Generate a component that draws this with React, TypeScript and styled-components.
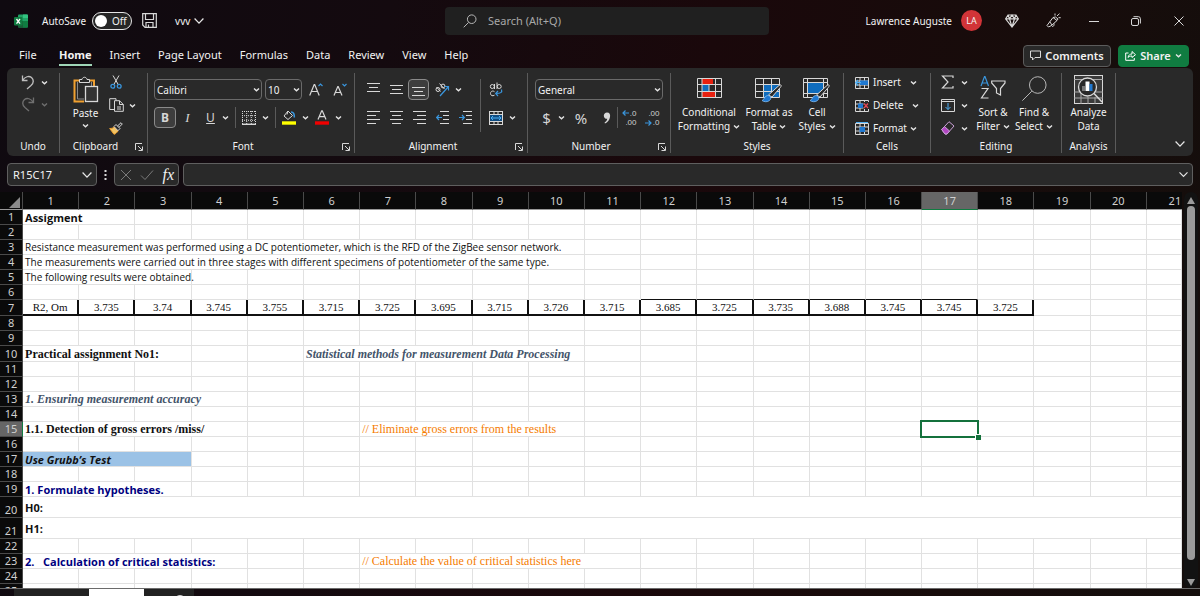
import React from "react";
import styled, { createGlobalStyle, css } from "styled-components";

const ui = `"Noto Sans", "Open Sans", sans-serif`;
const calibri = `"Open Sans", "Noto Sans", sans-serif`;
const times = `"Liberation Serif", serif`;

const Global = createGlobalStyle`
  *, *::before, *::after { box-sizing: border-box; }
  body { margin: 0; background: #150a0e; overflow: hidden; }
  button, input, select { font: inherit; color: inherit; }
`;

const Page = styled.div`
  display: flex;
  flex-direction: column;
  height: 100vh;
  overflow: hidden;
  background: linear-gradient(100deg, #0f0a10 0%, #140a0f 30%, #1a080b 55%, #170c0b 80%, #140e0c 100%);
  color: #f2f2f2;
  font-family: ${ui};
  font-size: 11px;
  line-height: 14px;
`;

/* ---------- title bar ---------- */

const TitleBar = styled.header`
  display: flex;
  align-items: center;
  height: 41px;
  padding-left: 14px;
  flex: none;
`;

const TitleSide = styled.div<{ $end?: boolean }>`
  flex: 1;
  display: flex;
  align-items: center;
  justify-content: ${(p) => (p.$end ? "flex-end" : "flex-start")};
`;

const AutoSave = styled.label`
  display: flex;
  align-items: center;
  gap: 6px;
  margin-left: 14px;
  font-size: 10px;
  input {
    position: absolute;
    opacity: 0;
  }
`;

const Track = styled.span`
  display: flex;
  align-items: center;
  gap: 5px;
  width: 40px;
  height: 18px;
  padding-left: 2px;
  border: 1px solid #e6e6e6;
  border-radius: 9px;
  background: #262626;
  &::before {
    content: "";
    width: 12px;
    height: 12px;
    border-radius: 50%;
    background: #fff;
  }
`;

const PlainButton = styled.button<{ $w?: number; $h?: number }>`
  display: flex;
  align-items: center;
  justify-content: center;
  gap: 4px;
  flex: none;
  ${(p) => p.$w && `width: ${p.$w}px;`}
  ${(p) => p.$h && `height: ${p.$h}px;`}
  padding: 0;
  border: 0;
  background: none;
  line-height: 14px;
  white-space: nowrap;
`;

const FileName = styled(PlainButton)`
  margin-left: 18px;
  font-size: 10px;
`;

const SaveButton = styled(PlainButton)`
  margin-left: 10px;
`;

const Search = styled.label`
  display: flex;
  align-items: center;
  gap: 11px;
  flex: 0 1 324px;
  height: 28px;
  padding-left: 18px;
  border-radius: 4px;
  background: #202020;
  input {
    flex: 1;
    min-width: 0;
    padding: 0;
    border: 0;
    outline: 0;
    background: none;
  }
  input::placeholder {
    color: #a8a8a8;
    opacity: 1;
  }
`;

const Account = styled(PlainButton)`
  gap: 9px;
  margin-right: 9px;
  font-size: 10px;
`;

const Avatar = styled.span`
  width: 21px;
  height: 21px;
  border-radius: 50%;
  background: #d13438;
  font-size: 9px;
  line-height: 21px;
  text-align: center;
`;

/* ---------- ribbon tabs ---------- */

const TabRow = styled.nav`
  display: flex;
  align-items: center;
  gap: 18px;
  height: 27px;
  flex: none;
  padding: 2px 11px 0 19px;
`;

const RibbonTab = styled.a<{ $active?: boolean }>`
  min-width: 22px;
  padding-bottom: 1px;
  border-bottom: 2px solid ${(p) => (p.$active ? "#9fd5b7" : "transparent")};
  color: inherit;
  font-weight: ${(p) => (p.$active ? 700 : 400)};
  line-height: 17px;
  text-decoration: none;
`;

const TabActions = styled.div`
  display: flex;
  gap: 7px;
  margin-left: auto;
`;

const Pill = styled.button<{ $green?: boolean }>`
  display: flex;
  align-items: center;
  justify-content: center;
  gap: 4px;
  width: ${(p) => (p.$green ? 71 : 88)}px;
  height: 22px;
  padding: 0;
  border: 1px solid ${(p) => (p.$green ? "#107c41" : "#5c5c5c")};
  border-radius: 4px;
  background: ${(p) => (p.$green ? "#107c41" : "#292929")};
  font-weight: 600;
`;

/* ---------- ribbon ---------- */

const Ribbon = styled.section`
  display: flex;
  flex: none;
  height: 88px;
  margin: 0 7px;
  padding: 5px 0 3px;
  border-radius: 6px;
  background: #292929;
  font-size: 10px;
`;

const Group = styled.div<{ $w: number }>`
  display: flex;
  flex-direction: column;
  justify-content: space-between;
  width: ${(p) => p.$w}px;
  flex: none;
  border-right: 1px solid #5a5a5a;
`;

const GroupLabel = styled.div<{ $more?: boolean }>`
  display: grid;
  grid-template-columns: ${(p) => (p.$more ? "1fr 16px" : "1fr")};
  align-items: center;
  height: 13px;
  line-height: 13px;
  text-align: center;
  button {
    justify-self: center;
  }
`;

const GroupBody = styled.div<{ $pad?: string; $gap?: number }>`
  display: flex;
  align-items: flex-start;
  gap: ${(p) => p.$gap ?? 0}px;
  padding: ${(p) => p.$pad ?? "0"};
`;

const Column = styled.div<{ $gap?: number; $pad?: string }>`
  display: flex;
  flex-direction: column;
  gap: ${(p) => p.$gap ?? 5}px;
  padding: ${(p) => p.$pad ?? "0"};
`;

const Row = styled.div<{ $h?: number; $gap?: number }>`
  display: flex;
  align-items: center;
  gap: ${(p) => p.$gap ?? 0}px;
  height: ${(p) => p.$h ?? 21}px;
`;

const Tool = styled(PlainButton)<{ $on?: boolean }>`
  ${(p) =>
    p.$on &&
    css`
      border: 1px solid #8a8a8a;
      border-radius: 4px;
      background: #3d3d3d;
    `}
`;

const BigTool = styled(PlainButton)<{ $gap?: number }>`
  flex-direction: column;
  justify-content: flex-start;
  gap: ${(p) => p.$gap ?? 0}px;
  span {
    display: flex;
    align-items: center;
    gap: 3px;
  }
`;

const Art = styled.div<{ $h: number }>`
  height: ${(p) => p.$h}px;
`;

const Glyph = styled.span<{ $serif?: boolean; $size?: number; $b?: boolean; $i?: boolean; $u?: boolean }>`
  font-family: ${(p) => (p.$serif ? times : ui)};
  font-size: ${(p) => p.$size ?? 12}px;
  font-weight: ${(p) => (p.$b ? 700 : 400)};
  font-style: ${(p) => (p.$i ? "italic" : "normal")};
  text-decoration: ${(p) => (p.$u ? "underline" : "none")};
  color: #d6d6d6;
`;

const Divider = styled.span<{ $h?: number }>`
  width: 1px;
  height: ${(p) => p.$h ?? 21}px;
  background: #5a5a5a;
`;

const Picker = styled.span<{ $w: number }>`
  position: relative;
  width: ${(p) => p.$w}px;
  select {
    width: 100%;
    height: 21px;
    padding: 0 0 0 2px;
    border: 1px solid #6a6a6a;
    border-radius: 4px;
    appearance: none;
    background: #292929;
  }
  svg {
    position: absolute;
    right: 2px;
    top: 7px;
    pointer-events: none;
  }
`;

const CollapseButton = styled(PlainButton)`
  align-self: flex-end;
  margin: 0 8px 4px auto;
`;

/* ---------- formula bar ---------- */

const FormulaBar = styled.div`
  display: flex;
  align-items: center;
  flex: none;
  gap: 4px;
  padding: 7px 7px 6px;
`;

const BarBox = styled.div<{ $w?: number }>`
  display: flex;
  align-items: center;
  justify-content: space-between;
  ${(p) => (p.$w ? `width: ${p.$w}px;` : "flex: 1;")}
  height: 23px;
  padding: 0 4px 0 5px;
  border: 1px solid #5f5f5f;
  border-radius: 4px;
  background: #292929;
  input {
    flex: 1;
    min-width: 0;
    padding: 0;
    border: 0;
    outline: 0;
    background: none;
  }
`;

const Fx = styled.span`
  font-family: ${times};
  font-size: 16px;
  font-style: italic;
`;

/* ---------- sheet ---------- */

const SheetArea = styled.main`
  display: flex;
  flex: 1;
  min-height: 0;
  overflow: hidden;
`;

const SheetView = styled.div`
  flex: 1;
  min-width: 0;
  overflow: hidden;
  background: #fff;
`;

const Table = styled.table`
  width: 100%;
  table-layout: fixed;
  border-collapse: separate;
  border-spacing: 0;
  color: #111;
`;

const HeadCell = styled.th<{ $on?: boolean; $row?: boolean; $last?: boolean }>`
  height: ${(p) => (p.$row ? 15 : 18)}px;
  padding: 0 0 0 ${(p) => (p.$last ? 21 : 0)}px;
  overflow: hidden;
  background: ${(p) => (p.$on ? "#666" : "#0a0a0a")};
  border: 0 solid #4a4a4a;
  border-right-width: ${(p) => (p.$last ? 0 : 1)}px;
  border-bottom-width: 1px;
  ${(p) => !p.$row && `border-bottom-color: ${p.$on ? "#107c41" : "#9a9a9a"};`}
  ${(p) => p.$row && p.$on && "border-right-color: #107c41;"}
  color: #d0d0d0;
  font-size: 11px;
  font-weight: 400;
  line-height: 14px;
  text-align: center;
  vertical-align: ${(p) => (p.$row ? "bottom" : "middle")};
`;

const Corner = styled(HeadCell)`
  svg {
    display: block;
    margin: 4px 2px 0 auto;
  }
`;

type Look = "plain" | "bold" | "boldItalic" | "navy" | "serifBold" | "serifItalic" | "orange" | "value";

const looks: Record<Look, ReturnType<typeof css>> = {
  plain: css`font-family: ${calibri}; font-size: 10px;`,
  bold: css`font-family: ${calibri}; font-size: 11px; font-weight: 700;`,
  boldItalic: css`font-family: ${calibri}; font-size: 11px; font-weight: 700; font-style: italic;`,
  navy: css`font-family: ${calibri}; font-size: 11px; font-weight: 700; color: #000080;`,
  serifBold: css`font-family: ${times}; font-size: 12px; font-weight: 700;`,
  serifItalic: css`font-family: ${times}; font-size: 12px; font-weight: 700; font-style: italic; color: #44546a;`,
  orange: css`font-family: ${times}; font-size: 12px; color: #f57c00;`,
  value: css`font-family: ${times}; font-size: 11px; text-align: center;`,
};

const Cell = styled.td<{ $look: Look; $h: number; $boxed?: boolean; $topped?: boolean; $fill?: string; $mid?: boolean }>`
  position: relative;
  height: ${(p) => p.$h}px;
  padding: 0 0 0 ${(p) => (p.$look === "value" ? 0 : 2)}px;
  border: 0 solid #e1e1e1;
  border-right-width: 1px;
  border-bottom-width: 1px;
  line-height: 13px;
  white-space: pre;
  vertical-align: ${(p) => (p.$mid ? "middle" : "bottom")};
  background: ${(p) => p.$fill ?? "none"};
  ${(p) => looks[p.$look]}
  ${(p) => p.$boxed && "border-color: #111; border-bottom-width: 2px; border-right-width: 2px;"}
  ${(p) => p.$topped && "border-bottom-color: #111;"}
`;

const Selection = styled.span`
  position: absolute;
  z-index: 1;
  inset: -2px;
  border: 2px solid #14713c;
  &::after {
    content: "";
    position: absolute;
    right: -4px;
    bottom: -4px;
    width: 6px;
    height: 6px;
    border: solid #fff;
    border-width: 1px 0 0 1px;
    background: #14713c;
  }
`;

const ScrollBar = styled.div`
  display: flex;
  flex-direction: column;
  align-items: center;
  justify-content: space-between;
  width: 14px;
  margin: 0 2px;
  padding: 5px 0 2px;
  border-radius: 7px;
  background: #121212;
`;

const Thumb = styled.div`
  width: 8px;
  flex: 1;
  margin: 2px 0 19px;
  border-radius: 4px;
  background: #9a9a9a;
`;

const SheetTabs = styled.footer`
  display: flex;
  flex: none;
  height: 8px;
  overflow: hidden;
  padding: 0 0 0 14px;
  border-top: 1px solid #6b6b6b;
  line-height: 16px;
`;

const TabNav = styled.div`
  width: 75px;
  height: 24px;
  background: #222;
`;

const SheetTab = styled.button`
  width: 55px;
  height: 24px;
  padding: 0;
  border: 0;
  background: #fff;
  color: #1e5c3c;
  font-size: 10px;
  font-weight: 700;
`;

const AddSheet = styled(PlainButton)`
  width: 50px;
  height: 24px;
  padding-left: 22px;
  background: #222;
`;

/* ---------- icons ---------- */

type IconProps = { w: number; h?: number; children: React.ReactNode; stroke?: string };
const Icon = ({ w, h = w, children, stroke = "#d8d8d8" }: IconProps) => (
  <svg width={w} height={h} viewBox={`0 0 ${w} ${h}`} fill="none" stroke={stroke} aria-hidden="true">
    {children}
  </svg>
);

const Chevron = ({ w = 7, stroke = "#e6e6e6" }: { w?: number; stroke?: string }) => (
  <svg width={w} height={w} viewBox="0 0 7 7" fill="none" stroke={stroke} strokeWidth={w > 7 ? 0.9 : 1.4} aria-hidden="true">
    <path d={w > 7 ? "M0.4 1.8L3.5 5L6.6 1.8" : "M1 2.5L3.5 4.7L6 2.5"} />
  </svg>
);

const Launcher = () => (
  <PlainButton aria-label="More options" $w={8} $h={8}>
    <Icon w={8}>
      <path d="M0.5 7V0.5H7M3 3L7 7M7.5 3.5V7.5H3.5" />
    </Icon>
  </PlainButton>
);

const ExcelIcon = () => (
  <Icon w={14} stroke="none">
    <rect x="4" y="0.5" width="10" height="13" rx="1" fill="#21a366" />
    <path d="M9 0.5h4a1 1 0 0 1 1 1V4H9z" fill="#33c481" />
    <path d="M4 7h5v6.5H5a1 1 0 0 1-1-1z" fill="#185c37" />
    <path d="M9 7h5v5.500a1 1 0 0 1-1 1H9z" fill="#107c41" />
    <rect x="0" y="3" width="8.500" height="8.500" rx="1" fill="#107c41" />
    <path d="M2.500 5l3.500 4.600M6 5L2.500 9.600" stroke="#fff" strokeWidth="1.300" />
  </Icon>
);

const SaveIcon = () => (
  <Icon w={15}>
    <path d="M0.700 0.700H14.300V14.300H3L0.700 12ZM3.500 0.700V6.500H11.500V0.700M4 14V9.500H11V14M6.500 11.500V14" strokeWidth="1.200" />
  </Icon>
);

const SearchIcon = ({ w = 14 }: { w?: number }) => (
  <svg width={w} height={w} viewBox="0 0 14 14" fill="none" stroke="#b8b8b8" strokeWidth={14 / w} aria-hidden="true">
    <circle cx="8.700" cy="5.200" r="4.300" />
    <path d="M5.600 8.400L0.700 13.300" />
  </svg>
);

const GemIcon = () => (
  <Icon w={14} h={14}>
    <path d="M3 1H11L13.400 4.800L7 13L0.600 4.800ZM0.600 4.800H13.400M3 1L4.500 4.800L7 13L9.500 4.800L11 1M4.500 4.800L7 1L9.500 4.800" strokeWidth="1.200" />
  </Icon>
);

const PenIcon = () => (
  <Icon w={15} h={15}>
    <path d="M1 12.500L7 4.500L11 7.500L5.500 12.500L2.500 14ZM3.800 8.800L6 12M7 4.500L9.500 4L12 6L11 7.500M5.500 12.500C6.500 14.500 8.500 13 8 10.500M9 2.500V0.500M11 3L13.500 0.700M12.500 4.700H14.700" />
  </Icon>
);

const UndoIcon = ({ flip }: { flip?: boolean }) => (
  <Icon w={14} h={15} stroke={flip ? "#6f6f6f" : "#bdbdbd"}>
    <path
      transform={flip ? "translate(14 0) scale(-1 1)" : undefined}
      d="M1.500 0.500V5.500H6.500M1.500 5.500C4 1.500 8 0.500 10.500 2.500C13 5 12.500 8 10 10.500L6 14"
      strokeWidth="1.300"
    />
  </Icon>
);

const PasteIcon = () => (
  <Icon w={26} h={28}>
    <path d="M8 4.500H1.500V25.500H11M16 4.500H21V10" stroke="#f0a030" strokeWidth="2" />
    <path d="M4.500 6V23H11M18.500 6V10" stroke="#8a8a8a" />
    <path d="M6.500 6.500V3.500H9C9.500 0.500 13.500 0.500 14 3.500H16.500V6.500Z" fill="#292929" />
    <rect x="12.500" y="10.500" width="12" height="15" fill="#333" strokeWidth="1.300" />
  </Icon>
);

const CutIcon = () => (
  <Icon w={14}>
    <path d="M4 0.500L9.500 10M10 0.500L4.500 10" />
    <circle cx="3.800" cy="11.300" r="1.900" stroke="#3a96dd" strokeWidth="1.300" />
    <circle cx="10.200" cy="11.300" r="1.900" stroke="#3a96dd" strokeWidth="1.300" />
  </Icon>
);

const CopyIcon = () => (
  <Icon w={15} h={14}>
    <path d="M5 11.500H0.700V0.700H7V2.500M5.500 2.700H10.500L14.300 6.500V13.300H5.500ZM10.500 2.700V6.500H14.300M8 9H12M8 11H12" />
  </Icon>
);

const BrushIcon = () => (
  <Icon w={14} h={13}>
    <path d="M0.700 6.500C3 6.500 4 6 5 5L9 9C8 10.500 6.500 12 5 12.300Z" fill="#f2c464" stroke="#f0a030" />
    <path d="M5 4.500L7 2.500L11 6.500L9 8.700ZM8.500 4L12 0.700L13.300 2L10 5.300" />
  </Icon>
);

const FontSizeIcon = ({ down }: { down?: boolean }) => (
  <Icon w={14} h={13}>
    <path d={down ? "M1 12.500L4.800 3.500H5.200L9 12.500M2.500 9.500H7.500" : "M0.700 12.500L5.200 1.500H5.700L10.200 12.500M2.500 8.500H8.500"} strokeWidth="1.200" />
    <path d={down ? "M9.500 1L11.500 3L13.500 1" : "M9.500 3L11.500 1L13.500 3"} stroke="#3a96dd" strokeWidth="1.200" />
  </Icon>
);

const BorderIcon = () => (
  <Icon w={14} h={14}>
    <path d="M0.500 0V14M4.700 0V14M9.300 0V14M13.500 0V14M0 0.500H14M0 4.700H14M0 9.300H14" strokeDasharray="1 1" />
    <path d="M0 13.300H14" strokeWidth="1.400" />
  </Icon>
);

const FillIcon = () => (
  <Icon w={14} h={15}>
    <path d="M6 1L10.500 5.500L6 9.500L2 6ZM6 1L5 4.500" />
    <path d="M9 2C11.500 2 12.500 4 12.300 7.500" stroke="#3a96dd" strokeWidth="1.600" />
    <path d="M0 13H14" stroke="#ff0" strokeWidth="3.400" />
  </Icon>
);

const FontColorIcon = () => (
  <Icon w={14} h={15}>
    <path d="M3 9.500L6.700 0.800H7.300L11 9.500M4.500 6.700H9.500" strokeWidth="1.200" />
    <path d="M0 13H14" stroke="#f00000" strokeWidth="3.400" />
  </Icon>
);

const lines: Record<string, string> = {
  top: "M0 1.500H13M2 5.500H11M0 9.500H13",
  middle: "M0 3.500H13M2 7.500H11M0 11.500H13",
  bottom: "M0 5.500H13M2 9.500H11M0 13.500H13",
  left: "M0 1.500H13M0 5.500H9M0 9.500H13M0 13.500H9",
  center: "M0 1.500H13M2 5.500H11M0 9.500H13M2 13.500H11",
  right: "M0 1.500H13M4 5.500H13M0 9.500H13M4 13.500H13",
};
const LinesIcon = ({ kind }: { kind: string }) => (
  <Icon w={13} h={15}>
    <path d={lines[kind]} />
  </Icon>
);

const IndentIcon = ({ out }: { out?: boolean }) => (
  <Icon w={13} h={15}>
    <path d="M4 1.500H13M7 5.500H13M7 9.500H13M4 13.500H13" />
    <path d={out ? "M6 7.500H0.700M3 5L0.700 7.500L3 10" : "M0 7.500H5.300M3 5L5.300 7.500L3 10"} stroke="#3a96dd" strokeWidth="1.200" />
  </Icon>
);

const OrientIcon = () => (
  <Icon w={15} h={14}>
    <circle cx="3" cy="6.500" r="2" />
    <path d="M1.500 4L5.500 8.500M4.500 0.500L9.500 6" />
    <circle cx="8" cy="3" r="1.900" />
    <path d="M5 13L13.500 3.500M9.500 3.500H13.500V7.500" stroke="#3a96dd" strokeWidth="1.200" />
  </Icon>
);

const WrapIcon = () => (
  <Icon w={14} h={15}>
    <circle cx="3.300" cy="4.500" r="2" />
    <path d="M5.500 2V7M8 0.500V7M5.500 9.700C3.500 8.200 1.500 9.500 1.500 11.500C1.500 13.500 3.500 14.500 5.500 13.200" />
    <circle cx="10.200" cy="4.500" r="2" />
    <path d="M12.500 7.500C13.500 10.500 11.500 11.500 7 11.500M9 9L6.700 11.500L9 14" stroke="#3a96dd" strokeWidth="1.200" />
  </Icon>
);

const MergeIcon = () => (
  <Icon w={14} h={14}>
    <rect x="0.500" y="0.500" width="13" height="13" />
    <path d="M0 3.500H14M0 10.500H14M5 0V3.500M9 0V3.500M5 10.500V14M9 10.500V14" />
    <rect x="1" y="4" width="12" height="6" fill="#0f4c81" stroke="none" />
    <path d="M2 7H12M4 5L2 7L4 9M10 5L12 7L10 9" stroke="#4fb0f5" />
  </Icon>
);

const DecimalWrap = styled.span<{ $up?: boolean }>`
  position: relative;
  display: block;
  width: 15px;
  color: #d0d0d0;
  font-family: "Liberation Sans", sans-serif;
  font-size: 8px;
  line-height: 9px;
  text-align: right;
  svg {
    position: absolute;
    left: 0;
    ${(p) => (p.$up ? "top" : "bottom")}: 0;
  }
`;

const DecimalIcon = ({ up }: { up?: boolean }) => (
  <DecimalWrap $up={up}>
    <Icon w={7} h={8} stroke="#3a96dd">
      <path d={up ? "M7 4H1M3.500 1.500L1 4L3.500 6.500" : "M0 4H6M3.500 1.500L6 4L3.500 6.500"} strokeWidth="1.200" />
    </Icon>
    {up ? ".0" : ".00"}
    <br />
    {up ? ".00" : ".0"}
  </DecimalWrap>
);

const gridLines = "M0.500 0.500H24.500V19.500H0.500ZM0 6.500H25M0 13.500H25M8.500 0V20M16.500 0V20";

const ConditionalIcon = () => (
  <Icon w={25} h={20}>
    <path d="M5 1H16V6H5ZM5 14H18V19H5Z" fill="#e8200f" stroke="none" />
    <path d="M5 6.500H12V13.500H5Z" fill="#0f6cbd" stroke="none" />
    <path d="M0.500 0.500H24.500V19.500H0.500ZM0 6.500H25M0 13.500H25M5 0V20M18.500 0V20M12 6V14" />
  </Icon>
);

const BrushOver = () => (
  <>
    <path d="M13.500 17L24 7.500C26 6 27 7.500 25.500 9.200L17 19Z" fill="#292929" />
    <path d="M7 22.500C9.500 22 9 18 12.500 17.500C15.500 17.500 17 20.500 14.500 22.500C12.500 24.300 9 24 7 22.500Z" fill="#1f78d1" stroke="#8cc4f5" strokeWidth="0.700" />
  </>
);

const FormatTableIcon = () => (
  <Icon w={28} h={25}>
    <path d="M8.500 6.500H24.500V19.500H8.500Z" fill="#0f6cbd" stroke="none" />
    <path d={gridLines} />
    <BrushOver />
  </Icon>
);

const CellStylesIcon = () => (
  <Icon w={28} h={25}>
    <path d="M0.500 0.500H24.500V19.500H0.500ZM4.500 0V20M20.500 0V20M0 4.500H25M0 15.500H25" />
    <path d="M5 5H20V15H5Z" fill="#0f6cbd" stroke="none" />
    <BrushOver />
  </Icon>
);

const CellsIcon = ({ kind }: { kind: "insert" | "delete" | "format" }) => (
  <Icon w={14} h={13}>
    <path d="M0.500 1.500H13.500V12.500H0.500ZM0 5H14M0 9H14M5 1V13M9.500 1V13" />
    {kind === "insert" && (
      <>
        <path d="M5 4.500H13V9H5Z" fill="#1f78d1" stroke="none" />
        <path d="M6 6.700H0.500M3 4L0.700 6.700L3 9.500" stroke="#4fb0f5" strokeWidth="1.200" />
      </>
    )}
    {kind === "delete" && (
      <>
        <path d="M3 4.500H8V9H3Z" fill="#1f78d1" stroke="none" />
        <rect x="8.500" y="3" width="6" height="7" fill="#292929" stroke="none" />
        <path d="M9 4.500L13 9M13 4.500L9 9" stroke="#e74856" strokeWidth="1.200" />
      </>
    )}
    {kind === "format" && (
      <>
        <path d="M4.500 5H10V10H4.500Z" fill="#1f78d1" stroke="none" />
        <path d="M1 0.500H13" stroke="#4fb0f5" />
      </>
    )}
  </Icon>
);

const SumIcon = () => (
  <Icon w={14} h={14}>
    <path d="M12 3V1H1.500L7 7L1.500 13H12V11" strokeWidth="1.200" />
  </Icon>
);

const FillDownIcon = () => (
  <Icon w={14} h={13}>
    <path d="M0.500 0.500H13.500V12.500H0.500ZM0 2.500H14" />
    <path d="M7 4V10.500M4.500 8L7 10.500L9.500 8" stroke="#4fb0f5" />
  </Icon>
);

const EraserIcon = () => (
  <Icon w={14} h={14} stroke="#c9a0d6">
    <path d="M0.700 8.500L8 0.700L13 5L6 13H4Z" />
    <path d="M0.700 8.500L3.500 5.500L8.500 10L6 13H4Z" fill="#b146c2" />
  </Icon>
);

const SortFilterIcon = () => (
  <Icon w={26} h={25}>
    <path d="M1 11L4.500 1.500H5L8.500 11M2.300 8H7.200" stroke="#3a96dd" strokeWidth="1.200" />
    <path d="M1.500 13.500H8L1.500 23H8.500" strokeWidth="1.200" />
    <path d="M11.700 6H25V8L20.500 13.500V20L16.500 18V13.500L11.700 8Z" strokeWidth="1.200" />
  </Icon>
);

const AnalyzeIcon = () => (
  <Icon w={29} h={29}>
    <rect x="0.500" y="0.500" width="28" height="28" fill="#3a3a3a" />
    <path d="M0 4.500H29M0 17H29M0 23H29M7 17V29M14 22V29M21 22V29" stroke="#a8a8a8" />
    <circle cx="13.500" cy="12" r="9" fill="#292929" strokeWidth="1.300" />
    <path d="M20 18.500L28 27" strokeWidth="1.500" />
    <rect x="8" y="11" width="3" height="5" fill="#777" stroke="none" />
    <rect x="11.500" y="6.500" width="4" height="9.500" fill="#fff" stroke="none" />
    <rect x="15.500" y="9" width="3" height="7" fill="#1f78d1" stroke="none" />
  </Icon>
);

/* ---------- sheet data ---------- */

type Entry = { col: number; span?: number; text: string; look: Look; fill?: string };

const rowEntries: Record<number, Entry[]> = {
  1: [{ col: 1, span: 2, text: "Assigment", look: "bold" }],
  3: [{ col: 1, span: 10, text: "Resistance measurement was performed using a DC potentiometer, which is the RFD of the ZigBee sensor network.", look: "plain" }],
  4: [{ col: 1, span: 10, text: "The measurements were carried out in three stages with different specimens of potentiometer of the same type.", look: "plain" }],
  5: [{ col: 1, span: 3, text: "The following results were obtained.", look: "plain" }],
  7: ["R2, Om", "3.735", "3.74", "3.745", "3.755", "3.715", "3.725", "3.695", "3.715", "3.726", "3.715", "3.685", "3.725", "3.735", "3.688", "3.745", "3.745", "3.725"].map(
    (text, i) => ({ col: i + 1, text, look: "value" as Look })
  ),
  10: [
    { col: 1, span: 3, text: "Practical assignment No1:", look: "serifBold" },
    { col: 6, span: 5, text: "Statistical methods for measurement Data Processing", look: "serifItalic" },
  ],
  13: [{ col: 1, span: 4, text: "1. Ensuring measurement accuracy", look: "serifItalic" }],
  15: [
    { col: 1, span: 4, text: "1.1. Detection of gross errors /miss/", look: "serifBold" },
    { col: 7, span: 4, text: "// Eliminate gross errors from the results", look: "orange" },
  ],
  17: [{ col: 1, span: 3, text: "Use Grubb’s Test", look: "boldItalic", fill: "#9bc2e6" }],
  19: [{ col: 1, span: 3, text: "1. Formulate hypotheses.", look: "navy" }],
  20: [{ col: 1, span: 21, text: "H0:", look: "bold" }],
  21: [{ col: 1, span: 21, text: "H1:", look: "bold" }],
  23: [
    { col: 1, span: 4, text: "2.   Calculation of critical statistics:", look: "navy" },
    { col: 7, span: 5, text: "// Calculate the value of critical statistics here", look: "orange" },
  ],
};

const rowHeights: Record<number, number> = { 7: 16, 10: 16, 20: 21, 21: 21 };
const columnCount = 21;
const selected = { row: 15, col: 17 };

const SheetRow = ({ row }: { row: number }) => {
  const height = rowHeights[row] ?? 15;
  const cells: React.ReactNode[] = [];
  for (let col = 1; col <= columnCount; ) {
    const entry = rowEntries[row]?.find((e) => e.col === col);
    const span = entry?.span ?? 1;
    cells.push(
      <Cell
        key={col}
        colSpan={span}
        $look={entry?.look ?? "plain"}
        $h={height}
        $fill={entry?.fill}
        $boxed={row === 7 && col <= 18}
        $topped={row === 6 && col >= 12 && col <= 17}
        $mid={height > 20}
      >
        {entry?.text}
        {row === selected.row && col === selected.col && <Selection />}
      </Cell>
    );
    col += span;
  }
  return (
    <tr>
      <HeadCell scope="row" $row $on={row === selected.row}>
        {row}
      </HeadCell>
      {cells}
    </tr>
  );
};

const Sheet = () => (
  <Table>
    <colgroup>
      <col width={23} />
      {Array.from({ length: 20 }, (_, i) => (
        <col key={i} width={56} />
      ))}
      <col width={35} />
    </colgroup>
    <thead>
      <tr>
        <Corner as="td">
          <Icon w={11} h={11} stroke="none">
            <path d="M11 0V11H0Z" fill="#8a8a8a" />
          </Icon>
        </Corner>
        {Array.from({ length: columnCount }, (_, i) => (
          <HeadCell key={i} scope="col" $on={i + 1 === selected.col} $last={i + 1 === columnCount}>
            {i + 1}
          </HeadCell>
        ))}
      </tr>
    </thead>
    <tbody>
      {Array.from({ length: 25 }, (_, i) => (
        <SheetRow key={i} row={i + 1} />
      ))}
    </tbody>
  </Table>
);

/* ---------- app ---------- */

const ribbonTabs = ["File", "Home", "Insert", "Page Layout", "Formulas", "Data", "Review", "View", "Help"];

const Label = ({ text, more }: { text: string; more?: boolean }) => (
  <GroupLabel $more={more}>
    <span>{text}</span>
    {more && <Launcher />}
  </GroupLabel>
);

export default function App() {
  return (
    <Page>
      <Global />
      <TitleBar>
        <TitleSide>
          <ExcelIcon />
          <AutoSave>
            AutoSave
            <input type="checkbox" />
            <Track>Off</Track>
          </AutoSave>
          <SaveButton aria-label="Save">
            <SaveIcon />
          </SaveButton>
          <FileName>
            vvv <Chevron w={10} />
          </FileName>
        </TitleSide>
        <Search>
          <SearchIcon />
          <input type="search" placeholder="Search (Alt+Q)" aria-label="Search" />
        </Search>
        <TitleSide $end>
          <Account>
            Lawrence Auguste <Avatar>LA</Avatar>
          </Account>
          <PlainButton $w={42} aria-label="Premium"><GemIcon /></PlainButton>
          <PlainButton $w={40} aria-label="Coming soon"><PenIcon /></PlainButton>
          <PlainButton $w={42} aria-label="Minimize">
            <Icon w={10}><path d="M0 5.500H10" /></Icon>
          </PlainButton>
          <PlainButton $w={42} aria-label="Restore">
            <Icon w={10}>
              <rect x="0.500" y="2.500" width="7" height="7" rx="1.500" />
              <path d="M2.500 0.700H7.500A2 2 0 0 1 9.400 2.700V7.500" />
            </Icon>
          </PlainButton>
          <PlainButton $w={43} aria-label="Close">
            <Icon w={10}><path d="M0.500 0.500L9.500 9.500M9.500 0.500L0.500 9.500" /></Icon>
          </PlainButton>
        </TitleSide>
      </TitleBar>

      <TabRow>
        {ribbonTabs.map((t) => (
          <RibbonTab key={t} href="#" $active={t === "Home"}>{t}</RibbonTab>
        ))}
        <TabActions>
          <Pill>
            <Icon w={11} h={11}><path d="M0.500 1H10.500V7.500H5L2.500 10V7.500H0.500Z" /></Icon>
            Comments
          </Pill>
          <Pill $green>
            <Icon w={11} h={11} stroke="#fff">
              <path d="M3.500 3H0.700V10.300H9.300V8M3 7.500C3.500 5 5 4 7 4V1.500L10.500 4.700L7 7.500V6C5 6 4 6.500 3 7.500Z" />
            </Icon>
            Share
            <Chevron />
          </Pill>
        </TabActions>
      </TabRow>

      <Ribbon>
        <Group $w={53}>
          <GroupBody $pad="0 0 0 14px">
            <Column $gap={4}>
              <Row $h={18} $gap={6}>
                <Tool aria-label="Undo"><UndoIcon /></Tool>
                <Chevron />
              </Row>
              <Row $h={18} $gap={6}>
                <Tool aria-label="Redo"><UndoIcon flip /></Tool>
                <Chevron stroke="#6f6f6f" />
              </Row>
            </Column>
          </GroupBody>
          <Label text="Undo" />
        </Group>

        <Group $w={88}>
          <GroupBody $pad="0 0 0 12px" $gap={10}>
            <Column $pad="3px 0 0">
              <BigTool $w={27} $gap={2}>
                <PasteIcon />
                <span>Paste</span>
                <Chevron />
              </BigTool>
            </Column>
            <Column $gap={5}>
              <Row $h={18}><Tool aria-label="Cut"><CutIcon /></Tool></Row>
              <Row $h={18} $gap={5}><Tool aria-label="Copy"><CopyIcon /></Tool><Chevron /></Row>
              <Row $h={18}><Tool aria-label="Format painter"><BrushIcon /></Tool></Row>
            </Column>
          </GroupBody>
          <Label text="Clipboard" more />
        </Group>

        <Group $w={207}>
          <GroupBody $pad="6px 0 0 6px">
            <Column $gap={7}>
              <Row $gap={3}>
                <Picker $w={108}>
                  <select aria-label="Font"><option>Calibri</option></select>
                  <Chevron />
                </Picker>
                <Picker $w={37}>
                  <select aria-label="Font size"><option>10</option></select>
                  <Chevron />
                </Picker>
                <Tool $w={21} aria-label="Increase font size"><FontSizeIcon /></Tool>
                <Tool $w={21} aria-label="Decrease font size"><FontSizeIcon down /></Tool>
              </Row>
              <Row>
                <Tool $w={22} $h={21} $on aria-label="Bold"><Glyph $b>B</Glyph></Tool>
                <Tool $w={23} aria-label="Italic"><Glyph $serif $i $size={13}>I</Glyph></Tool>
                <Tool $w={23} aria-label="Underline"><Glyph $u>U</Glyph></Tool>
                <Row $gap={6}>
                  <Chevron />
                  <Divider />
                  <Tool aria-label="Borders"><BorderIcon /></Tool>
                  <Chevron />
                  <Divider />
                  <Tool aria-label="Fill color"><FillIcon /></Tool>
                  <Chevron />
                  <Tool aria-label="Font color"><FontColorIcon /></Tool>
                  <Chevron />
                </Row>
              </Row>
            </Column>
          </GroupBody>
          <Label text="Font" more />
        </Group>

        <Group $w={173}>
          <GroupBody $pad="6px 0 0 7px">
            <Column $gap={7}>
              <Row>
                <Tool $w={23} aria-label="Top align"><LinesIcon kind="top" /></Tool>
                <Tool $w={23} aria-label="Middle align"><LinesIcon kind="middle" /></Tool>
                <Tool $w={21} $h={21} $on aria-label="Bottom align"><LinesIcon kind="bottom" /></Tool>
                <Tool $w={26} aria-label="Orientation"><OrientIcon /></Tool>
                <Chevron />
              </Row>
              <Row>
                <Tool $w={23} aria-label="Align left"><LinesIcon kind="left" /></Tool>
                <Tool $w={23} aria-label="Center"><LinesIcon kind="center" /></Tool>
                <Tool $w={23} aria-label="Align right"><LinesIcon kind="right" /></Tool>
                <Tool $w={23} aria-label="Decrease indent"><IndentIcon out /></Tool>
                <Tool $w={23} aria-label="Increase indent"><IndentIcon /></Tool>
              </Row>
            </Column>
            <Column $pad="0 8px 0 3px"><Divider $h={53} /></Column>
            <Column $gap={7}>
              <Row><Tool aria-label="Wrap text"><WrapIcon /></Tool></Row>
              <Row $gap={6}><Tool aria-label="Merge and center"><MergeIcon /></Tool><Chevron /></Row>
            </Column>
          </GroupBody>
          <Label text="Alignment" more />
        </Group>

        <Group $w={143}>
          <GroupBody $pad="6px 0 0 7px">
            <Column $gap={7}>
              <Row>
                <Picker $w={128}>
                  <select aria-label="Number format"><option>General</option></select>
                  <Chevron />
                </Picker>
              </Row>
              <Row>
                <Tool $w={23} aria-label="Currency"><Glyph $size={15}>$</Glyph></Tool>
                <Chevron />
                <Tool $w={32} aria-label="Percent"><Glyph $size={15}>%</Glyph></Tool>
                <Tool $w={20} aria-label="Comma style">
                  <Icon w={8} h={12} stroke="none">
                    <path d="M4 0.500C6.500 0.500 7.500 2.500 7 5C6.500 8 4.500 10.500 2 11.500L1.500 10.700C3 9.700 4 8.500 4.200 6.800C2.500 7 0.800 5.800 0.800 3.700C0.800 1.800 2.200 0.500 4 0.500Z" fill="#d8d8d8" />
                  </Icon>
                </Tool>
                <Divider />
                <Tool $w={22} aria-label="Increase decimal"><DecimalIcon up /></Tool>
                <Tool $w={24} aria-label="Decrease decimal"><DecimalIcon /></Tool>
              </Row>
            </Column>
          </GroupBody>
          <Label text="Number" more />
        </Group>

        <Group $w={173}>
          <GroupBody $pad="5px 0 0 7px" $gap={5}>
            <BigTool $w={62}>
              <Art $h={27}><ConditionalIcon /></Art>
              <span>Conditional</span>
              <span>Formatting <Chevron /></span>
            </BigTool>
            <BigTool $w={48}>
              <Art $h={27}><FormatTableIcon /></Art>
              <span>Format as</span>
              <span>Table <Chevron /></span>
            </BigTool>
            <BigTool $w={38}>
              <Art $h={27}><CellStylesIcon /></Art>
              <span>Cell</span>
              <span>Styles <Chevron /></span>
            </BigTool>
          </GroupBody>
          <Label text="Styles" />
        </Group>

        <Group $w={87}>
          <GroupBody $pad="0 0 0 11px">
            <Column $gap={5}>
              <Row $h={18} $gap={9}><Tool><CellsIcon kind="insert" /> Insert</Tool><Chevron /></Row>
              <Row $h={18} $gap={9}><Tool><CellsIcon kind="delete" /> Delete</Tool><Chevron /></Row>
              <Row $h={18} $gap={3}><Tool><CellsIcon kind="format" /> Format</Tool><Chevron /></Row>
            </Column>
          </GroupBody>
          <Label text="Cells" />
        </Group>

        <Group $w={131}>
          <GroupBody $pad="0 0 0 10px">
            <Column $gap={5}>
              <Row $h={18} $gap={6}><Tool aria-label="Sum"><SumIcon /></Tool><Chevron /></Row>
              <Row $h={18} $gap={6}><Tool aria-label="Fill"><FillDownIcon /></Tool><Chevron /></Row>
              <Row $h={18} $gap={6}><Tool aria-label="Clear"><EraserIcon /></Tool><Chevron /></Row>
            </Column>
            <Column $pad="2px 0 0 6px">
              <BigTool $w={38}>
                <Art $h={30}><SortFilterIcon /></Art>
                <span>Sort &amp;</span>
                <span>Filter <Chevron /></span>
              </BigTool>
            </Column>
            <Column $pad="2px 0 0 3px">
              <BigTool $w={38}>
                <Art $h={30}><SearchIcon w={27} /></Art>
                <span>Find &amp;</span>
                <span>Select <Chevron /></span>
              </BigTool>
            </Column>
          </GroupBody>
          <Label text="Editing" />
        </Group>

        <Group $w={54}>
          <GroupBody $pad="2px 0 0 5px">
            <BigTool $w={43}>
              <Art $h={30}><AnalyzeIcon /></Art>
              <span>Analyze</span>
              <span>Data</span>
            </BigTool>
          </GroupBody>
          <Label text="Analysis" />
        </Group>

        <CollapseButton aria-label="Collapse ribbon"><Chevron w={10} /></CollapseButton>
      </Ribbon>

      <FormulaBar>
        <BarBox $w={90}>
          <input defaultValue="R15C17" aria-label="Name box" />
          <PlainButton aria-label="Open name list"><Chevron w={10} /></PlainButton>
        </BarBox>
        <Icon w={9} h={12} stroke="none">
          <path d="M3.500 1H5.500V3H3.500ZM3.500 5H5.500V7H3.500ZM3.500 9H5.500V11H3.500Z" fill="#d8d8d8" />
        </Icon>
        <BarBox $w={65}>
          <PlainButton aria-label="Cancel">
            <Icon w={12} stroke="#7a7a7a"><path d="M1 1L11 11M11 1L1 11" /></Icon>
          </PlainButton>
          <PlainButton aria-label="Enter">
            <Icon w={14} h={12} stroke="#7a7a7a"><path d="M1 6.500L5 10.500L13 1.500" /></Icon>
          </PlainButton>
          <PlainButton aria-label="Insert function"><Fx>fx</Fx></PlainButton>
        </BarBox>
        <BarBox>
          <input aria-label="Formula" />
          <PlainButton aria-label="Expand formula bar"><Chevron w={9} /></PlainButton>
        </BarBox>
      </FormulaBar>

      <SheetArea>
        <SheetView>
          <Sheet />
        </SheetView>
        <ScrollBar>
          <Icon w={8} h={7} stroke="none"><path d="M4 0L8 7H0Z" fill="#9a9a9a" /></Icon>
          <Thumb />
          <Icon w={8} h={7} stroke="none"><path d="M0 0H8L4 7Z" fill="#9a9a9a" /></Icon>
        </ScrollBar>
      </SheetArea>

      <SheetTabs>
        <TabNav />
        <SheetTab>Sheet 1</SheetTab>
        <AddSheet aria-label="New sheet">
          <Icon w={12}><circle cx="6" cy="6" r="5.500" /><path d="M6 3V9M3 6H9" /></Icon>
        </AddSheet>
      </SheetTabs>
    </Page>
  );
}
